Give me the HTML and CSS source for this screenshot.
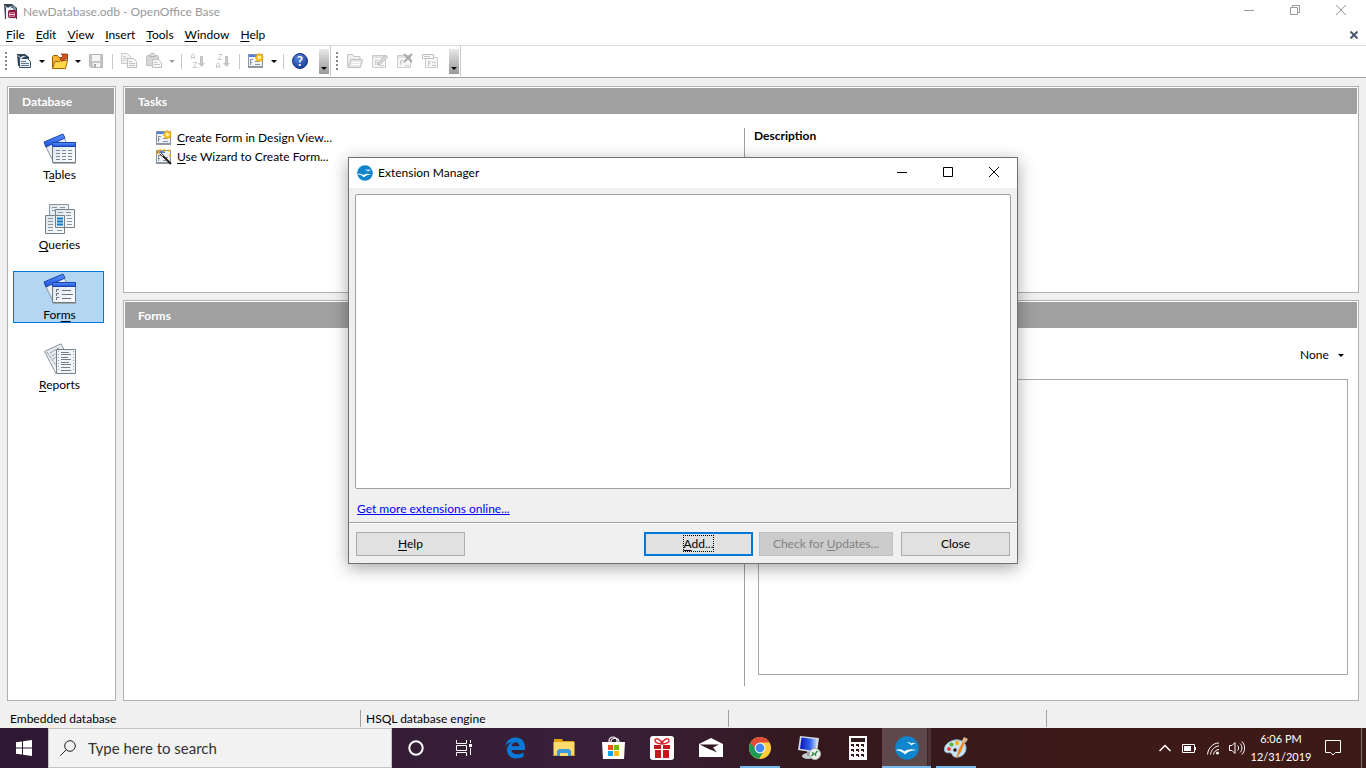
FILE: index.html
```html
<!DOCTYPE html>
<html lang="en">
<head>
    <meta charset="UTF-8">
    <meta name="viewport" content="width=device-width, initial-scale=1.0">
    <title>NewDatabase.odb - OpenOffice Base</title>
    <link rel="stylesheet" href="styles.css">
</head>
<body>
    <!-- Shared icon shapes -->
    <svg class="sprite" aria-hidden="true">
        <defs>
            <linearGradient id="blueBar" x1="0" y1="0" x2="0" y2="1">
                <stop offset="0" stop-color="#5c94ff"/>
                <stop offset="1" stop-color="#1c50d8"/>
            </linearGradient>
            <linearGradient id="paper" x1="0" y1="0" x2="1" y2="1">
                <stop offset="0" stop-color="#d9e4ec"/>
                <stop offset="1" stop-color="#ffffff"/>
            </linearGradient>
            <linearGradient id="screen" x1="0" y1="0" x2="1" y2="0">
                <stop offset="0" stop-color="#0a14b8"/>
                <stop offset="0.6" stop-color="#3564e8"/>
                <stop offset="1" stop-color="#c8dcff"/>
            </linearGradient>
            <radialGradient id="helpBlue" cx="0.4" cy="0.3" r="0.7">
                <stop offset="0" stop-color="#5a86dc"/>
                <stop offset="1" stop-color="#1c409c"/>
            </radialGradient>
        </defs>
        <symbol id="form" viewBox="0 0 16 16">
            <rect x="0.5" y="1.5" width="14" height="12" fill="#eef2f6" stroke="#8a96a2"/>
            <path d="M1 2h8v2H1z" fill="#4a80e8"/>
            <path d="M2.500 6v6M2 6.500h3M2 9.500h2M7 8.500h5M7 11.500h5" stroke="#8a949e" fill="none"/>
            <path d="M0 14.500h15" stroke="#94989c"/>
        </symbol>
        <symbol id="star" viewBox="0 0 16 16">
            <path d="M11.500 0l1 1.700 2-1.200-.3 2.200 1.800.8-1.400 1.500 1.400 1.800-2.200.2.200 2-1.800-.9-1.200 1.400-1-1.800-2 .8.500-2.200-2-.8 1.700-1.400-1-1.900 2.200.3.300-2z" fill="#f8b80c"/>
            <circle cx="11.300" cy="4.600" r="2.400" fill="#fff2a0" stroke="#f0a000" stroke-width="0.600"/>
        </symbol>
        <symbol id="gull" viewBox="0 0 16 16">
            <circle cx="8" cy="8" r="7.800" fill="#0e85cd"/>
            <path d="M8 4.400c1.200-.4 2-.2 2.700.6 1-.7 2.100-.7 3.300-.1-1.200.2-2 .6-3 1.500-.8-1-1.600-1.600-3-2z" fill="#fff"/>
            <path d="M.3 9.300c2.400-.9 4.800-.5 5.800 1 2-1.700 5-2 8.200-.9-3.300.2-5.700 1-7.600 3C5.500 10.700 3.500 9.800.3 9.300z" fill="#fff"/>
        </symbol>
    </svg>

    <!-- Title bar -->
    <header class="title-bar">
        <svg class="icon" viewBox="0 0 16 16">
            <path d="M1 0h8l5 4v11H2z" fill="#35485a"/>
            <path d="M3 4h7l3 3v8H3z" fill="#eef2f5"/>
            <path d="M1 2c2 0 3 1 4 2 1-1 3-2 5-1-2 0-3 1-5 3-1-2-2-3-4-4z" fill="#fff"/>
            <path d="M10 1l3 3v2h-3z" fill="#7b90a3"/>
            <rect x="5" y="6" width="9" height="8" rx="2" fill="#8f1840"/>
            <path d="M6 8.500h6v4H6z" fill="#f3dce4"/>
            <path d="M6.500 9.500h5M6.500 11.500h5" stroke="#a83860"/>
        </svg>
        <h1>NewDatabase.odb - OpenOffice Base</h1>
        <div class="window-buttons">
            <button type="button" aria-label="Minimize"><svg class="icon" viewBox="0 0 16 16"><path d="M3 8.500h10"/></svg></button>
            <button type="button" aria-label="Restore"><svg class="icon" viewBox="0 0 16 16"><path d="M3.500 5.500h7v7h-7zM5.500 5.500v-2h7v7h-2"/></svg></button>
            <button type="button" aria-label="Close"><svg class="icon" viewBox="0 0 16 16"><path d="M3 3l10 10M13 3L3 13"/></svg></button>
        </div>
    </header>

    <!-- Menu bar -->
    <nav class="menu-bar">
        <button type="button"><u>F</u>ile</button>
        <button type="button"><u>E</u>dit</button>
        <button type="button"><u>V</u>iew</button>
        <button type="button"><u>I</u>nsert</button>
        <button type="button"><u>T</u>ools</button>
        <button type="button"><u>W</u>indow</button>
        <button type="button"><u>H</u>elp</button>
        <button type="button" class="close-doc" aria-label="Close document"><svg viewBox="0 0 8 8" width="8" height="8"><path d="M.5.500l7 7M7.500.500l-7 7" stroke="#4c586c" stroke-width="2"/></svg></button>
    </nav>

    <!-- Toolbars -->
    <div class="toolbars">
        <div class="toolbar">
            <span class="grip"></span>
            <button type="button" class="tool" aria-label="New">
                <svg class="icon" viewBox="0 0 16 16">
                    <path d="M1 1h8l4 3v3H3v6H2z" fill="#2f4354"/>
                    <path d="M3.500 5.500h8l3 3v6h-11z" fill="#eef3f8" stroke="#354e68"/>
                    <path d="M0 2c2 0 3.500 1 4.500 2.500C6 3 8 2 10 3.500 8 3.500 6.500 4.500 5 6.500 4 4.500 2.500 3 0 2z" fill="#dbe6ee"/>
                    <path d="M5 8.500h5M5 10.500h8M5 12.500h8" stroke="#5c7894"/>
                </svg>
            </button>
            <button type="button" class="drop" aria-label="New menu"></button>
            <button type="button" class="tool" aria-label="Open">
                <svg class="icon" viewBox="0 0 16 16">
                    <path d="M.5 15.500v-12l1-1h4l1.500 2h6v11z" fill="#f5b62a" stroke="#9a5b00"/>
                    <path d="M.5 15.500l2.500-7H8l1-1h6.500l-2 8z" fill="#ffd84a" stroke="#a86808"/>
                    <path d="M8 6l3-3-2-2h6.500v6L13.500 5l-3.500 3.500z" fill="#d65418" stroke="#7c2408" stroke-width="0.700"/>
                </svg>
            </button>
            <button type="button" class="drop" aria-label="Open menu"></button>
            <button type="button" class="tool" disabled aria-label="Save">
                <svg class="icon" viewBox="0 0 16 16">
                    <path d="M1.500 1.500h13v13H3l-1.500-1.500z" fill="#c6c6c6" stroke="#b4b4b4"/>
                    <path d="M4 2h8v6H4zM5 10h7v4H5z" fill="#f5f5f5"/>
                    <path d="M6 11h2v3H6z" fill="#aaa"/>
                </svg>
            </button>
            <span class="separator"></span>
            <button type="button" class="tool" disabled aria-label="Copy">
                <svg class="icon" viewBox="0 0 16 16">
                    <path d="M.5.500h6l3 3v7h-9z" fill="#f3f3f3" stroke="#ccc"/>
                    <path d="M2 3.500h3M2 5.500h5M2 7.500h3" stroke="#ccc"/>
                    <path d="M6.500 5.500h6l3 3v6h-9z" fill="#f5f5f5" stroke="#c0c0c0"/>
                    <path d="M8 8.500h3M8 10.500h6M8 12.500h6" stroke="#c4c4c4"/>
                </svg>
            </button>
            <button type="button" class="tool" disabled aria-label="Paste">
                <svg class="icon" viewBox="0 0 16 16">
                    <path d="M.5 3.500l1-1h10l1 1v9h-12z" fill="#d8d8d8" stroke="#c0c0c0"/>
                    <path d="M3.500 3.500l1.500-3h3l1.500 3z" fill="#e6e6e6" stroke="#b4b4b4"/>
                    <path d="M6.500 6.500h6l3 3v5h-9z" fill="#f5f5f5" stroke="#c0c0c0"/>
                    <path d="M8 9.500h3M8 11.500h6" stroke="#c4c4c4"/>
                </svg>
            </button>
            <button type="button" class="drop" disabled aria-label="Paste menu"></button>
            <span class="separator"></span>
            <button type="button" class="tool" disabled aria-label="Sort ascending">
                <svg class="icon" viewBox="0 0 16 16">
                    <path d="M1.500 6V3l1-2h1l1 2v3M2 4.500h3M3 9.500h4L3 14.500h4" fill="none" stroke="#ccc"/>
                    <path d="M10 3h3v7h2l-3.500 4L8 10h2z" fill="#c4c4c4"/>
                </svg>
            </button>
            <button type="button" class="tool" disabled aria-label="Sort descending">
                <svg class="icon" viewBox="0 0 16 16">
                    <path d="M3 1.500h4L3 6.500h4M1.500 15v-3l1-2h1l1 2v3M2 13.500h3" fill="none" stroke="#ccc"/>
                    <path d="M10 3h3v7h2l-3.500 4L8 10h2z" fill="#c4c4c4"/>
                </svg>
            </button>
            <span class="separator"></span>
            <button type="button" class="tool" aria-label="New form">
                <svg class="icon" viewBox="0 0 16 16"><use href="#form"/><use href="#star"/></svg>
            </button>
            <button type="button" class="drop" aria-label="Form menu"></button>
            <span class="separator"></span>
            <button type="button" class="tool" aria-label="Help">
                <svg class="icon" viewBox="0 0 16 16">
                    <circle cx="8" cy="8" r="7.500" fill="url(#helpBlue)" stroke="#183a8c"/>
                    <text x="8" y="12.500" class="help-mark">?</text>
                </svg>
            </button>
            <button type="button" class="overflow" aria-label="More tools"></button>
        </div>
        <div class="toolbar">
            <span class="grip"></span>
            <button type="button" class="tool" disabled aria-label="Open object">
                <svg class="icon" viewBox="0 0 16 16">
                    <path d="M.5 13.500v-12h5l1.500 2h6v4" fill="#eee" stroke="#c4c4c4"/>
                    <path d="M1 14.500l3-8h11.500l-2 8z" fill="#e6e6e6" stroke="#c0c0c0"/>
                    <path d="M5 9.500h8M4.500 11.500h8" stroke="#fff"/>
                </svg>
            </button>
            <button type="button" class="tool" disabled aria-label="Edit">
                <svg class="icon" viewBox="0 0 16 16">
                    <path d="M.5 2.500h13v12H.5z" fill="#f6f6f6" stroke="#ccc"/>
                    <path d="M1 4h12M3 7.500h3M3.500 7v5M3 9.500h3M8 12.500h4" stroke="#ccc"/>
                    <path d="M6 10l7.500-8 2 2L8 11.500l-2.500.5z" fill="#ddd" stroke="#b4b4b4"/>
                </svg>
            </button>
            <button type="button" class="tool" disabled aria-label="Delete">
                <svg class="icon" viewBox="0 0 16 16">
                    <path d="M.5 2.500h13v12H.5z" fill="#f6f6f6" stroke="#ccc"/>
                    <path d="M1 4h12M3 7.500h3M3.500 7v5M3 9.500h3M8 12.500h4" stroke="#ccc"/>
                    <path d="M7 1l8 8M15 1L7 9" stroke="#a8a8a8" stroke-width="2"/>
                </svg>
            </button>
            <button type="button" class="tool" disabled aria-label="Rename">
                <svg class="icon" viewBox="0 0 16 16">
                    <path d="M3.500 4.500h12v10h-12z" fill="#f6f6f6" stroke="#ccc"/>
                    <path d="M.5 1.500h11v4H.5z" fill="#f6f6f6" stroke="#c0c0c0"/>
                    <path d="M2 3.500h6M6 8.500h3M6.500 8v5M6 10.500h2M10 9.500h4M10 12.500h4" stroke="#c8c8c8"/>
                </svg>
            </button>
            <button type="button" class="overflow" aria-label="More tools"></button>
        </div>
    </div>

    <!-- Work area -->
    <main class="workspace">
        <aside class="panel sidebar">
            <h2>Database</h2>
            <ul class="object-list">
                <li><button type="button">
                    <svg viewBox="0 0 34 32" width="34" height="32">
                        <path d="M2 12L20 3l8 15L10 28z" fill="url(#paper)" stroke="#8b949c"/>
                        <path d="M1 9L20 1l2 4L3 14z" fill="url(#blueBar)" stroke="#1846b0"/>
                        <path d="M9.500 9.500h23v20h-23z" fill="url(#paper)" stroke="#6d7a84"/>
                        <path d="M9.500 9.500h23v4h-23z" fill="url(#blueBar)" stroke="#1846b0"/>
                        <path d="M13 17.500h17M13 20.500h17M13 23.500h17M13 26.500h17" stroke="#7e8a94" stroke-dasharray="4 2"/>
                        <path d="M10 30.500h23" stroke="#bbb"/>
                    </svg>
                    <span>T<u>a</u>bles</span>
                </button></li>
                <li><button type="button">
                    <svg viewBox="0 0 34 32" width="34" height="32">
                        <path d="M6.500 1.500h19v18h-19z" fill="url(#paper)" stroke="#8b949c"/>
                        <path d="M9 4.500h14M9 7.500h4" stroke="#8b949c" stroke-dasharray="5 3"/>
                        <path d="M12.500 6.500h19v18h-19z" fill="url(#paper)" stroke="#75818a"/>
                        <path d="M15 9.500h14M15 12.500h14M24 15.500h5M24 18.500h5M24 21.500h5" stroke="#8b949c" stroke-dasharray="5 3"/>
                        <path d="M2.500 12.500h19v18h-19z" fill="url(#paper)" stroke="#75818a"/>
                        <path d="M12.500 12.500h9v12h-9z" fill="#dceefa" stroke="#75818a"/>
                        <path d="M5 15.500h5M5 18.500h5M5 21.500h5M5 24.500h5M5 27.500h5M14 27.500h5" stroke="#8b949c"/>
                        <path d="M14 15.500h6M14 18.500h6M14 21.500h6" stroke="#1479c4" stroke-width="2"/>
                    </svg>
                    <span><u>Q</u>ueries</span>
                </button></li>
                <li><button type="button" class="selected">
                    <svg viewBox="0 0 34 32" width="34" height="32">
                        <path d="M2 12L20 3l8 15L10 28z" fill="url(#paper)" stroke="#8b949c"/>
                        <path d="M1 9L20 1l2 4L3 14z" fill="url(#blueBar)" stroke="#1846b0"/>
                        <path d="M9.500 9.500h23v20h-23z" fill="url(#paper)" stroke="#6d7a84"/>
                        <path d="M9.500 9.500h23v4h-23z" fill="url(#blueBar)" stroke="#1846b0"/>
                        <path d="M13.500 19v-2.500H16M13.500 23v-2.500H16M13.500 27v-2.500H16M19 17.500h9M19 21.500h11M19 25.500h9" stroke="#68747e" fill="none"/>
                        <path d="M10 30.500h23" stroke="#9aa"/>
                    </svg>
                    <span>For<u>m</u>s</span>
                </button></li>
                <li><button type="button">
                    <svg viewBox="0 0 34 32" width="34" height="32">
                        <path d="M1.500 8.500L18 .8l8 15.700-13 14z" fill="url(#paper)" stroke="#8b949c"/>
                        <path d="M4 9l12 18M7 10l9-5M9 13l9-5M10 16l5-3" stroke="#8b949c" stroke-dasharray="3 1"/>
                        <path d="M13.500 6.500h19v24h-19z" fill="#f3f6f8" stroke="#75818a"/>
                        <path d="M15.500 8v21M30.500 8v21" stroke="#98a2aa" stroke-dasharray="1 2"/>
                        <path d="M18 9.500h8M18 11.500h10M18 14.500h7M18 16.500h10M18 19.500h8M18 21.500h10M18 24.500h9M18 27.500h10" stroke="#75818a"/>
                    </svg>
                    <span><u>R</u>eports</span>
                </button></li>
            </ul>
        </aside>

        <div class="panels">
            <section class="panel tasks">
                <h2>Tasks</h2>
                <div class="panel-body">
                    <ul class="task-list">
                        <li><button type="button"><svg class="icon" viewBox="0 0 16 16"><use href="#form"/><use href="#star"/></svg><span><u>C</u>reate Form in Design View...</span></button></li>
                        <li><button type="button"><svg class="icon" viewBox="0 0 16 16"><use href="#form"/><path d="M4 4l11 11" stroke="#222" stroke-width="2"/><path d="M3 3l4 4" stroke="#eee"/><path d="M1 1l3 3M8 0v3M0 5l2-1M12 2l2-1M13 6l2 1M4 0v2" stroke="#f0a800" stroke-width="1.500"/></svg><span><u>U</u>se Wizard to Create Form...</span></button></li>
                    </ul>
                    <div class="description">
                        <h3>Description</h3>
                    </div>
                </div>
            </section>
            <section class="panel forms">
                <h2>Forms</h2>
                <div class="panel-body">
                    <div class="form-list"></div>
                    <div class="preview">
                        <div class="preview-mode">
                            <select aria-label="Preview">
                                <option>None</option>
                            </select>
                            <span class="arrow"></span>
                        </div>
                        <div class="preview-box"></div>
                    </div>
                </div>
            </section>
        </div>
    </main>

    <!-- Status bar -->
    <footer class="status-bar">
        <span>Embedded database</span>
        <span>HSQL database engine</span>
        <span></span>
        <span></span>
    </footer>

    <!-- Windows taskbar -->
    <div class="taskbar">
        <button type="button" class="start" aria-label="Start">
            <svg class="icon" viewBox="0 0 16 16"><path d="M0 2.300l6-.9v6.100H0zM7 1.200L16 0v7.500H7zM0 8.500h6v6.100l-6-.9zM7 8.500h9V16l-9-1.200z" fill="#fff"/></svg>
        </button>
        <label class="search">
            <svg class="icon" viewBox="0 0 16 16"><circle cx="10" cy="6" r="5.300"/><path d="M6.300 9.700L.3 15.700"/></svg>
            <input type="text" placeholder="Type here to search" aria-label="Search">
        </label>
        <div class="system-apps">
            <button type="button" aria-label="Cortana"><svg viewBox="0 0 24 24"><circle cx="12" cy="12" r="6.700" fill="none" stroke="#fff" stroke-width="2"/></svg></button>
            <button type="button" aria-label="Task View"><svg viewBox="0 0 24 24"><path d="M4.500 4v3.500h10V4M4.500 20v-3.500h10V20M4.500 9.500h10v5h-10zM18.500 4v3M18.500 12v7" fill="none" stroke="#fff"/><path d="M17 8h3v3h-3z" fill="#fff"/></svg></button>
        </div>
        <div class="apps">
            <button type="button" aria-label="Edge"><svg viewBox="0 0 24 24"><path d="M2 10.500C3 5 7 1.500 12.500 1.500c6 0 9.500 4 9.500 9.800V14H8.500c.2 3 2.500 4.300 5.500 4.300 2.400 0 4.500-.7 6.500-1.900v4.400c-2.100 1.200-4.700 1.700-7.300 1.700-5.300 0-9.200-3.200-9.200-8.400 0-3.800 2-6.500 5-8C4.900 6.700 3.100 8.500 2 10.500zm6.600-.2h7.600c0-2.500-1.200-4-3.600-4-2.200 0-3.700 1.700-4 4z" fill="#0a79d8"/></svg></button>
            <button type="button" aria-label="File Explorer"><svg viewBox="0 0 24 24"><path d="M2 3h8l1 2h11v3H2z" fill="#e0a010"/><path d="M1.500 6h21v14h-21z" fill="#ffda6c"/><path d="M5 20v-5l2-2h10l2 2v5h-3v-3H8v3z" fill="#3c9be0"/><path d="M1.500 19.500H5M19 19.500h3.500" stroke="#d89b20"/></svg></button>
            <button type="button" aria-label="Microsoft Store"><svg viewBox="0 0 24 24"><path d="M8 7V5a4 4 0 0 1 8 0v2M10 6c0-5 8-5 8 0" fill="none" stroke="#fff" stroke-width="1.200"/><path d="M1 6h23l-1 17H2z" fill="#fff"/><path d="M7 9h5v5H7z" fill="#f04e22"/><path d="M13 9h5v5h-5z" fill="#7cb900"/><path d="M7 15h5v5H7z" fill="#00a2ed"/><path d="M13 15h5v5h-5z" fill="#fdb800"/></svg></button>
            <button type="button" aria-label="Offers"><svg viewBox="0 0 24 24"><rect width="24" height="24" rx="3" fill="#fff"/><path d="M4 9h7v4H4zM13 9h7v4h-7zM5 14h6v8H5zM13 14h6v8h-6z" fill="#c4161c"/><path d="M12 8C8 8 4.500 6.500 5 4c1-2.500 6-1 7 4 1-5 6-6.500 7-4 .5 2.500-3 4-7 4z" fill="none" stroke="#d4202a" stroke-width="1.500"/></svg></button>
            <button type="button" aria-label="Mail"><svg viewBox="0 0 24 24"><path d="M0 8l12-6 12 6v13H0z" fill="#fff"/><path d="M1 8.500h19l-6 3 4 5z" fill="#30191f"/><path d="M1 8.500l13 3-2 2.500z" fill="#30191f"/></svg></button>
            <button type="button" class="running" aria-label="Chrome"><svg viewBox="0 0 24 24"><circle cx="12" cy="12" r="11" fill="#fdd03b"/><path d="M2.500 6.500A11 11 0 0 1 21.500 6.500H12L7 15z" fill="#e24a3b"/><path d="M2.500 6.500a11 11 0 0 0 8.500 16.400L16.500 14 8 14z" fill="#1d9c58"/><circle cx="12" cy="12" r="5.400" fill="#fff"/><circle cx="12" cy="12" r="4.400" fill="#4586f3"/></svg></button>
            <button type="button" aria-label="Remote Desktop"><svg viewBox="0 0 24 24"><ellipse cx="11" cy="20" rx="6" ry="3" fill="#c6cbd0"/><path d="M10 15h4v5h-4z" fill="#9da5ac"/><path d="M3 0l19 2-2 15L1 14z" fill="#d6dce2"/><path d="M4.500 1.500L20 3.300l-1.500 12L3 12.700z" fill="url(#screen)"/><circle cx="18" cy="18" r="5.500" fill="#f0f2f0" stroke="#aab2aa"/><path d="M14.500 20l2-2-1-2M19 20l-1-2 2.500-3" fill="none" stroke="#2e8c3a" stroke-width="1.500"/></svg></button>
            <button type="button" aria-label="Calculator"><svg viewBox="0 0 24 24"><path d="M3 0h18v24H3z" fill="#fff"/><path d="M5 2h14v4H5zM5 8h3v3H7v-1H5zM10 8h3v3h-1v-1h-2zM15 8h3v3h-1v-1h-2zM5 13h3v3H7v-1H5zM10 13h3v3h-1v-1h-2zM15 13h3v3h-1v-1h-2zM5 18h3v3H7v-1H5zM10 18h3v3h-1v-1h-2zM15 18h3v3h-1v-1h-2z" fill="#32191d"/></svg></button>
            <button type="button" class="running active" aria-label="OpenOffice"><svg viewBox="0 0 24 24"><use href="#gull" width="24" height="24"/></svg></button>
            <button type="button" class="running" aria-label="Paint"><svg viewBox="0 0 24 24"><path d="M11 4c6-1 11 3 11 8 0 6-5 10-11 9-3-.5-2-3-4-4-2-.8-6 1-6.500-3C0 9 5 5 11 4z" fill="#c9e4f3" stroke="#8fb4c8"/><circle cx="5" cy="13" r="2" fill="#e04838"/><circle cx="7.500" cy="8.500" r="2" fill="#5fb030"/><circle cx="13" cy="7" r="2.200" fill="#f4b619"/><circle cx="11" cy="14" r="1.800" fill="#341820"/><path d="M12 23l2-8 5-10 2 1-4 10z" fill="#e58a28"/><path d="M18 6c0-3 1-3 2-5l4 2c-1 1-1 3-3 4z" fill="#d8b48c"/></svg></button>
        </div>
        <div class="tray">
            <button type="button" aria-label="Show hidden icons"><svg class="icon" viewBox="0 0 16 16"><path d="M2.500 11L8 5.500l5.500 5.500" stroke-width="1.500"/></svg></button>
            <button type="button" aria-label="Battery"><svg class="icon" viewBox="0 0 16 16"><path d="M1.500 4.500h12v8h-12z"/><path d="M3 6h7v5H3zM14 7h1v3h-1z" fill="#fff"/></svg></button>
            <button type="button" aria-label="Network"><svg class="icon" viewBox="0 0 16 16"><path d="M2.500 14.500C3 8 8 3 14 3M5.500 14.500C6 10 10 6 14 6M8.500 14.500C9 12 11 9.500 14 9.500"/><circle cx="12.500" cy="13" r="1.500" fill="#fff"/></svg></button>
            <button type="button" aria-label="Volume"><svg class="icon" viewBox="0 0 16 16"><path d="M.5 5.500H3l3-3v11l-3-3H.5zM8.500 5.500c1.500 1.500 1.500 3.500 0 5M11 3.500c2.500 2.500 2.500 6.500 0 9M13 1.500c3.500 4 3.500 9 0 13"/></svg></button>
            <button type="button" class="clock"><span>6:06 PM</span><span>12/31/2019</span></button>
            <button type="button" class="notifications" aria-label="Notifications"><svg class="icon" viewBox="0 0 16 16"><path d="M.5.500h15v12h-5L8 15l-2.500-2.500h-5z"/></svg></button>
            <button type="button" class="show-desktop" aria-label="Show desktop"></button>
        </div>
    </div>

    <!-- Extension Manager window -->
    <div class="dialog" role="dialog" aria-labelledby="dialogTitle">
        <div class="dialog-title">
            <svg class="icon" viewBox="0 0 16 16"><use href="#gull"/></svg>
            <h2 id="dialogTitle">Extension Manager</h2>
            <div class="window-buttons">
                <button type="button" aria-label="Minimize"><svg class="icon" viewBox="0 0 16 16"><path d="M3 8.500h10"/></svg></button>
                <button type="button" aria-label="Maximize"><svg class="icon" viewBox="0 0 16 16"><path d="M3.500 3.500h9v9h-9z"/></svg></button>
                <button type="button" aria-label="Close"><svg class="icon" viewBox="0 0 16 16"><path d="M3 3l10 10M13 3L3 13"/></svg></button>
            </div>
        </div>
        <div class="dialog-body">
            <div class="extension-list"></div>
            <a href="#">Get more extensions online...</a>
        </div>
        <div class="dialog-buttons">
            <button type="button" class="help"><u>H</u>elp</button>
            <button type="button" class="default"><span><u>A</u>dd...</span></button>
            <button type="button" class="updates" disabled>Check for <u>U</u>pdates...</button>
            <button type="button" class="close">Close</button>
        </div>
    </div>
</body>
</html>
```
FILE: styles.css
```css
/* Basic Reset */
* {
    box-sizing: border-box;
}

body {
    margin: 0;
    display: flex;
    flex-direction: column;
    min-height: 100vh;
    background: #f0f0f0;
    color: #000;
    font-family: Lato, "Open Sans", sans-serif;
    font-size: 12px;
    line-height: 16px;
}

button, input, select {
    margin: 0;
    padding: 0;
    border: none;
    background: none;
    color: inherit;
    font: inherit;
}

h1, h2, h3, ul {
    margin: 0;
    padding: 0;
    font-size: 12px;
    list-style: none;
}

svg {
    display: block;
    flex: none;
}

u {
    text-underline-offset: 2px;
}

.sprite {
    position: absolute;
    width: 0;
    height: 0;
}

.icon {
    width: 16px;
    height: 16px;
}

/* Title bar */
.title-bar {
    display: flex;
    align-items: center;
    gap: 4px;
    height: 24px;
    padding-left: 3px;
    background: #fff;
    color: #999;
}

.title-bar h1 {
    font-weight: normal;
}

.window-buttons {
    display: flex;
    margin-left: auto;
}

.window-buttons button {
    display: flex;
    justify-content: center;
    width: 46px;
    padding-bottom: 4px;
}

.title-bar .window-buttons {
    padding-right: 2px;
}

.window-buttons path {
    fill: none;
    stroke: currentColor;
}

/* Menu bar */
.menu-bar {
    display: flex;
    align-items: center;
    gap: 11px;
    height: 22px;
    padding: 0 8px 0 6px;
    background: #fff;
    border-bottom: 1px solid #dcdcdc;
}

.close-doc {
    margin-left: auto;
}

/* Toolbars */
.toolbars {
    display: flex;
    height: 32px;
    background: #fff;
    border-bottom: 1px solid #a0a0a0;
}

.toolbar {
    display: flex;
    align-items: center;
    height: 30px;
    padding-right: 1px;
    border-right: 1px solid #c8c8c8;
}

.grip {
    width: 3px;
    height: 18px;
    margin: 0 4px;
    background: repeating-linear-gradient(#888 0 2px, #fff 2px 4px) center / 2px 100% no-repeat;
}

.tool {
    display: flex;
    justify-content: center;
    width: 25px;
}

.help-mark {
    fill: #fff;
    font-size: 13px;
    font-weight: bold;
    text-anchor: middle;
}

.drop {
    display: flex;
    justify-content: center;
    width: 11px;
}

.drop::after, .arrow, .overflow::after {
    content: "";
    border: 3px solid transparent;
    border-top-color: #000;
    border-bottom: none;
}

.drop:disabled::after {
    border-top-color: #a0a0a0;
}

.separator {
    width: 1px;
    height: 15px;
    margin: 0 3px 0 4px;
    background: #c8c8c8;
}

.overflow {
    display: flex;
    align-items: flex-end;
    justify-content: center;
    width: 10px;
    height: 25px;
    margin: 1px 0 0 7px;
    padding-bottom: 4px;
    background: linear-gradient(#e8e8e8, #989898);
}

/* Work area */
.workspace {
    flex: 1;
    display: flex;
    gap: 7px;
    padding: 8px 7px 7px;
}

.panel {
    display: flex;
    flex-direction: column;
    padding: 1px;
    background: #fff;
    border: 1px solid #b0b0b0;
}

.panel h2 {
    height: 26px;
    padding: 6px 13px 4px;
    background: #a0a0a0;
    color: #fff;
}

.sidebar {
    width: 109px;
}

.object-list {
    display: grid;
    gap: 18px;
    padding: 17px 10px 0 4px;
}

.object-list button {
    display: flex;
    flex-direction: column;
    align-items: center;
    gap: 2px;
    width: 100%;
    height: 52px;
    padding: 1px 0 0 2px;
    border: 1px solid transparent;
}

.object-list .selected {
    background: #b3d6f2;
    border-color: #0078d7;
}

.panels {
    flex: 1;
    display: flex;
    flex-direction: column;
    gap: 7px;
}

.tasks {
    flex: 203 0 0;
}

.forms {
    flex: 397 0 0;
}

.panel-body {
    flex: 1;
    display: grid;
    grid-template-columns: 1fr 1fr;
    padding: 14px 0 6px 6px;
}

.task-list {
    padding-left: 25px;
}

.task-list button {
    display: flex;
    align-items: center;
    gap: 5px;
    height: 19px;
}

.description {
    padding-left: 9px;
    border-left: 1px solid #a0a0a0;
}

.forms .panel-body {
    padding-bottom: 13px;
}

.preview {
    display: flex;
    flex-direction: column;
    padding: 5px 9px 11px 13px;
    border-left: 1px solid #a0a0a0;
}

.preview-mode {
    display: flex;
    align-items: center;
    justify-content: flex-end;
    gap: 9px;
    padding: 0 4px 16px 0;
}

.preview-mode select {
    appearance: none;
}

.preview-box {
    flex: 1;
    border: 1px solid #a8a8a8;
}

/* Status bar */
.status-bar {
    display: grid;
    grid-template-columns: 350fr 368fr 318fr 320fr;
    height: 20px;
    padding-left: 10px;
}

.status-bar span {
    height: 17px;
    margin-top: 2px;
    line-height: 18px;
}

.status-bar span + span {
    padding-left: 5px;
    border-left: 1px solid #a0a0a0;
}

/* Windows taskbar */
.taskbar {
    display: flex;
    height: 40px;
    background: linear-gradient(90deg, #2f1833, #382038 45%, #34181d 60%, #3d1a18 80%, #3c1a18);
    color: #fff;
}

.start {
    display: flex;
    align-items: center;
    justify-content: center;
    width: 48px;
}

.search {
    display: flex;
    align-items: center;
    gap: 12px;
    width: 344px;
    padding: 0 11px;
    background: #f2f2f2;
    border: 1px solid #c4c4c4;
}

.search svg {
    fill: none;
    stroke: #222;
}

.search input {
    flex: 1;
    min-width: 0;
    font-size: 15px;
}

.search input::placeholder {
    color: #333;
}

.system-apps, .apps, .tray {
    display: flex;
}

.system-apps button {
    width: 48px;
}

.apps {
    margin-left: 2px;
}

.apps button {
    width: 49px;
}

.system-apps button, .apps button {
    display: flex;
    align-items: center;
    justify-content: center;
}

.system-apps svg, .apps svg {
    width: 24px;
    height: 24px;
}

.apps .running {
    background: linear-gradient(#76b9ed, #76b9ed) center bottom / 40px 2px no-repeat;
}

.apps .active {
    background: linear-gradient(#76b9ed, #76b9ed) center bottom / 100% 2px no-repeat, linear-gradient(90deg, #5f484c 45px, #3c2428 45px 46px, #4c3236 46px);
}

.tray {
    margin-left: auto;
}

.tray button {
    display: flex;
    align-items: center;
    justify-content: center;
    width: 24px;
}

.tray path {
    fill: none;
    stroke: #fff;
}

.tray path[fill] {
    fill: #fff;
    stroke: none;
}

.tray .clock {
    flex-direction: column;
    width: 64px;
    font-size: 11px;
    line-height: 18px;
}

.tray .notifications {
    width: 40px;
}

.tray .show-desktop {
    width: 5px;
    margin-left: 8px;
    border-left: 1px solid #84706f;
}

/* Extension Manager window */
.dialog {
    position: absolute;
    top: 157px;
    left: 50%;
    width: 670px;
    transform: translateX(-50%);
    background: #f0f0f0;
    border: 1px solid #707070;
    box-shadow: 0 4px 16px rgba(0, 0, 0, 0.35);
}

.dialog-title {
    display: flex;
    align-items: center;
    gap: 5px;
    height: 30px;
    padding-left: 8px;
    background: #fff;
}

.dialog-title h2 {
    font-weight: normal;
}

.dialog-title .window-buttons button {
    padding-bottom: 2px;
}

.dialog-body {
    padding: 6px 6px 5px;
    border-bottom: 1px solid #a0a0a0;
}

.extension-list {
    height: 295px;
    margin-bottom: 12px;
    background: #fff;
    border: 1px solid #a0a0a0;
    border-radius: 2px;
}

.dialog-body a {
    display: inline-block;
    margin-left: 2px;
    color: #00f;
}

.dialog-buttons {
    display: flex;
    gap: 6px;
    padding: 8px 7px 7px;
    border-top: 1px solid #fff;
}

.dialog-buttons button {
    width: 109px;
    height: 24px;
    background: #e1e1e1;
    border: 1px solid #adadad;
}

.dialog-buttons .help {
    margin-right: auto;
}

.dialog-buttons .close {
    margin-left: 2px;
}

.dialog-buttons .default {
    border: 2px solid #0078d7;
}

.dialog-buttons .default span {
    outline: 1px dotted #000;
}

.dialog-buttons .updates {
    width: 134px;
    background: #ccc;
    border-color: #bfbfbf;
    color: #838383;
}
```
